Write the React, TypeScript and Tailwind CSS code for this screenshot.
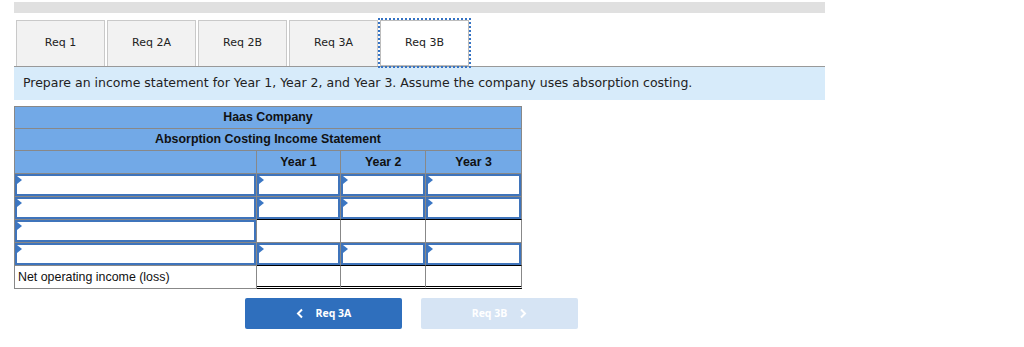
import React from 'react'

const tabs = ['Req 1', 'Req 2A', 'Req 2B', 'Req 3A', 'Req 3B']

function Pointer() {
  return (
    <span className="absolute left-0 top-0 h-0 w-0 border-y-[4px] border-l-[5px] border-y-transparent border-l-[#3b77c4]" />
  )
}

function InputBox() {
  return (
    <div className="relative h-full w-full border-2 border-[#3f74bb] bg-white">
      <Pointer />
    </div>
  )
}

type Row = {
  label?: string
  labelInput: boolean
  yearInputs: boolean
  bottom?: 'single' | 'double'
}

const rows: Row[] = [
  { labelInput: true, yearInputs: true },
  { labelInput: true, yearInputs: true, bottom: 'single' },
  { labelInput: true, yearInputs: false },
  { labelInput: true, yearInputs: true, bottom: 'single' },
  { label: 'Net operating income (loss)', labelInput: false, yearInputs: false, bottom: 'double' },
]

const yearWidths = ['w-[85px]', 'w-[85px]', 'w-[96px]']

function App() {
  return (
    <div className="h-[347px] w-[1024px] bg-white pt-[2px]" style={{ fontFamily: '"DejaVu Sans", Verdana, sans-serif' }}>
      <div className="ml-[14px] w-[811px]">
        <div className="h-[11px] bg-[#e0e0e0]" />

        <div className="mt-[7px] flex gap-[2px] pl-[2px]">
          {tabs.map((t, i) => {
            const active = i === tabs.length - 1
            return (
              <div
                key={t}
                className={
                  active
                    ? 'flex h-[46px] w-[89px] items-center justify-center border border-[#bdbdbd] bg-white text-[11px] text-[#222] outline-2 outline-dotted outline-[#3573c4]'
                    : 'flex h-[46px] w-[89px] items-center justify-center border border-b-0 border-[#c9c9c9] bg-[#f2f2f2] text-[11px] text-[#222]'
                }
              >
                {t}
              </div>
            )
          })}
        </div>

        <div className="flex h-[34px] items-center border-t border-[#999] bg-[#d7ebfa] pl-[9px] text-[12.5px] text-[#222]">
          Prepare an income statement for Year 1, Year 2, and Year 3. Assume the company uses absorption costing.
        </div>

        <div
          className="mt-[6px] w-[508px] border-l border-t border-[#888] text-[12.4px] text-[#111]"
          style={{ fontFamily: '"Liberation Sans", Arial, sans-serif' }}
        >
          <div className="flex h-[22px] items-center justify-center border-b border-r border-[#888] bg-[#72a9e7] font-bold">
            Haas Company
          </div>
          <div className="flex h-[22px] items-center justify-center border-b border-r border-[#888] bg-[#72a9e7] font-bold">
            Absorption Costing Income Statement
          </div>
          <div className="flex h-[23px] bg-[#72a9e7] font-bold">
            <div className="w-[242px] border-b border-r border-[#888]" />
            {['Year 1', 'Year 2', 'Year 3'].map((y, i) => (
              <div key={y} className={`${yearWidths[i]} flex items-center justify-center border-b border-r border-[#888]`}>
                {y}
              </div>
            ))}
          </div>

          {rows.map((r, idx) => (
            <div key={idx} className={idx === 2 ? 'flex h-[23px]' : 'flex h-[23px]'}>
              <div className="w-[242px] border-b border-r border-[#888] bg-white">
                {r.labelInput ? (
                  <InputBox />
                ) : (
                  <div className="flex h-full items-center pl-[3px]">{r.label}</div>
                )}
              </div>
              {yearWidths.map((w, i) => (
                <div
                  key={i}
                  className={
                    r.bottom === 'double'
                      ? `${w} border-b-[3px] border-r border-double border-b-black border-r-[#888] bg-white`
                      : r.bottom === 'single'
                        ? `${w} border-b border-r border-b-black border-r-[#888] bg-white`
                        : `${w} border-b border-r border-[#888] bg-white`
                  }
                >
                  {r.yearInputs && <InputBox />}
                </div>
              ))}
            </div>
          ))}
        </div>

        <div className="mt-[9px] flex gap-[19px] pl-[231px]" style={{ fontFamily: '"Open Sans", Roboto, sans-serif' }}>
          <div className="flex h-[31px] w-[157px] items-center justify-center gap-[12px] rounded-[2px] bg-[#2f6fbd] text-[10.5px] font-bold text-white">
            <svg width="8" height="11" viewBox="0 0 8 11" fill="none" stroke="white" strokeWidth="2">
              <path d="M6 1.5 L2 5.5 L6 9.5" />
            </svg>
            <span>Req 3A</span>
          </div>
          <div className="flex h-[31px] w-[157px] items-center justify-center gap-[12px] rounded-[2px] bg-[#d6e4f4] text-[10.5px] font-bold text-white">
            <span>Req 3B</span>
            <svg width="8" height="11" viewBox="0 0 8 11" fill="none" stroke="white" strokeWidth="2">
              <path d="M2 1.5 L6 5.5 L2 9.5" />
            </svg>
          </div>
        </div>
      </div>
    </div>
  )
}

export default App
